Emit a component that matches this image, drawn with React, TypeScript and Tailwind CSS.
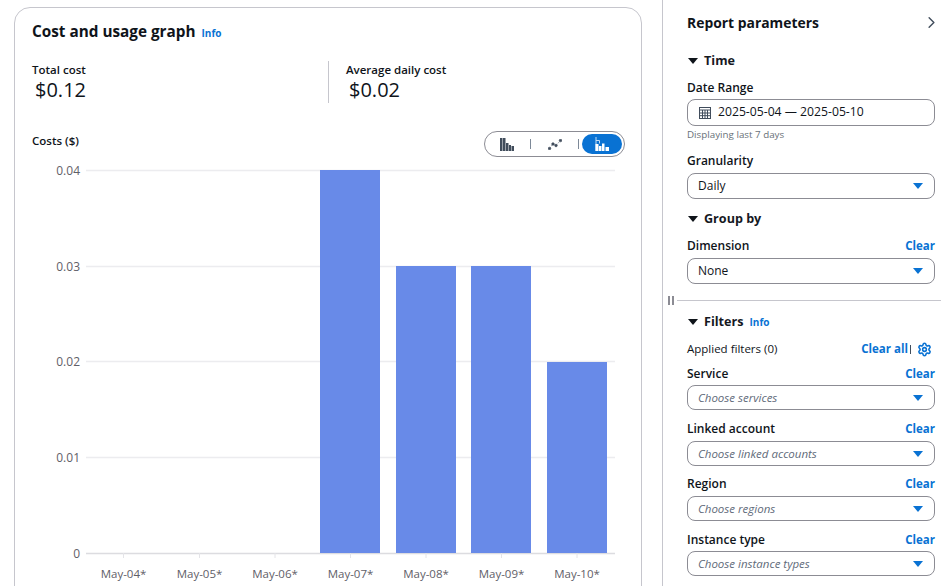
import { ChevronRight, Settings } from "lucide-react";

const gridLines = [
  { label: "0.04", y: 170 },
  { label: "0.03", y: 266 },
  { label: "0.02", y: 361 },
  { label: "0.01", y: 457 },
  { label: "0", y: 553 },
];

const bars = [
  { x: 320, y: 170 },
  { x: 396, y: 266 },
  { x: 471, y: 266 },
  { x: 547, y: 362 },
];

const days = [
  { label: "May-04*", x: 123.5 },
  { label: "May-05*", x: 199.5 },
  { label: "May-06*", x: 275 },
  { label: "May-07*", x: 350.5 },
  { label: "May-08*", x: 426 },
  { label: "May-09*", x: 501.5 },
  { label: "May-10*", x: 577 },
];

function CostChart() {
  return (
    <svg width="628" height="436" viewBox="14 150 628 436" className="block" fontFamily="'Open Sans', sans-serif">
      {gridLines.map((g) => (
        <g key={g.label}>
          <line x1="86" x2="615" y1={g.y + 0.5} y2={g.y + 0.5} stroke={g.y === 553 ? "#dcdce0" : "#ececef"} strokeWidth="1.4" />
          <text x="80" y={g.y + 5} textAnchor="end" fontSize="12" fill="#5f6068">
            {g.label}
          </text>
        </g>
      ))}
      {bars.map((b) => (
        <rect key={b.x} x={b.x} y={b.y} width="60" height={553 - b.y} fill="#688ae8" />
      ))}
      {days.map((d) => (
        <g key={d.label}>
          <line x1={d.x} x2={d.x} y1="553" y2="558" stroke="#e4e4e8" />
          <text x={d.x} y="577.5" textAnchor="middle" fontSize="11.5" fill="#5f6068">
            {d.label}
          </text>
        </g>
      ))}
    </svg>
  );
}

function ChartTypeToggle() {
  return (
    <div className="flex h-[26px] w-[141px] items-center rounded-full border border-[#8c8c94] pl-[15px] pr-[2px]">
      <svg width="14" height="13" viewBox="0 0 14 13" fill="#414d5c">
        <rect x="0" y="0" width="2.5" height="13" />
        <rect x="3" y="0" width="2.5" height="13" />
        <rect x="6" y="5" width="2.5" height="8" />
        <rect x="9" y="7" width="2" height="6" />
        <rect x="11.5" y="8" width="2.5" height="5" />
      </svg>
      <span className="ml-[16px] h-[10px] w-px bg-[#7d8998]" />
      <svg className="ml-[17px]" width="14" height="11" viewBox="0 0 14 11" fill="#414d5c" stroke="#414d5c" strokeWidth="0.6">
        <path d="M1.5 9.5 5 5 8 6.5 12.5 1.5" fill="none" strokeDasharray="1.5 1.5" />
        <circle cx="1.5" cy="9.5" r="1.3" />
        <circle cx="5" cy="5" r="1.3" />
        <circle cx="8" cy="6.5" r="1.3" />
        <circle cx="12.5" cy="1.5" r="1.3" />
      </svg>
      <span className="ml-[16px] h-[10px] w-px bg-[#7d8998]" />
      <div className="ml-[3px] flex h-[20px] w-[40px] items-center justify-center rounded-full bg-[#0972d3]">
        <svg width="14" height="14" viewBox="0 0 14 14" fill="#ffffff">
          <path d="M0.5 0h1v14h-1zM0.5 3h4v1h-3v3h-1zM4 3.5h1v3h-1z" opacity="0.75" />
          <rect x="0.5" y="7" width="3" height="7" />
          <rect x="4" y="9" width="2.5" height="5" />
          <rect x="7" y="6.5" width="2.5" height="7.5" />
          <rect x="10.5" y="10" width="3.5" height="4" />
        </svg>
      </div>
    </div>
  );
}

function SectionHeading({ title, info }: { title: string; info?: boolean }) {
  return (
    <div className="flex h-[20px] items-center">
      <span className="ml-[1px] h-0 w-0 border-x-[5px] border-t-[6px] border-x-transparent border-t-[#0f141a]" />
      <span className="ml-[6px] text-[12.6px] font-bold text-[#16191f]">{title}</span>
      {info && <span className="ml-[6px] mt-[1px] text-[10px] font-bold text-[#0972d3]">Info</span>}
    </div>
  );
}

function FieldLabel({ label, clear }: { label: string; clear?: boolean }) {
  return (
    <div className="flex h-[18px] items-center justify-between text-[12px] font-semibold text-[#0f141a]">
      <span>{label}</span>
      {clear && <span className="text-[11.5px] font-bold text-[#0972d3]">Clear</span>}
    </div>
  );
}

function SelectBox({ value, placeholder }: { value: string; placeholder?: boolean }) {
  return (
    <div
      className={
        placeholder
          ? "flex h-[25px] items-center justify-between rounded-lg border border-[#8c8c94] pl-[10px] pr-[11px]"
          : "flex h-[26px] items-center justify-between rounded-lg border border-[#8c8c94] pl-[10px] pr-[11px]"
      }
    >
      <span className={placeholder ? "text-[11.5px] italic text-[#5f6b7a]" : "text-[12px] text-[#0f141a]"}>{value}</span>
      <span className="h-0 w-0 border-x-[5px] border-t-[6px] border-x-transparent border-t-[#0972d3]" />
    </div>
  );
}

function Sash() {
  return (
    <div className="mt-[15px] flex h-[2px] items-center">
      <div className="ml-[5px] flex gap-[2px]">
        <span className="h-[9px] w-[2px] bg-[#8c8c94]" />
        <span className="h-[9px] w-[2px] bg-[#8c8c94]" />
      </div>
      <div className="ml-[3px] h-px flex-1 bg-[#c6c6cd]" />
    </div>
  );
}

export default function App() {
  return (
    <div className="flex h-[586px] w-[941px] overflow-hidden bg-white font-['Open_Sans',sans-serif] text-[#0f141a]">
      {/* left side */}
      <div className="h-full w-[663px] shrink-0 border-r border-[#c6c6cd] pl-[14px] pt-[7px]">
        <div className="h-[700px] w-[628px] rounded-t-2xl border border-[#c6c6cd]">
          <div className="flex h-[34px] items-end pl-[17px]">
            <span className="text-[15.3px] font-bold leading-[22px]">Cost and usage graph</span>
            <span className="mb-[2px] ml-[6px] text-[10px] font-bold leading-[14px] text-[#0972d3]">Info</span>
          </div>

          <div className="mt-[20px] flex pl-[17px]">
            <div className="w-[296px]">
              <div className="text-[11.5px] font-semibold leading-[16px]">Total cost</div>
              <div className="ml-[3px] text-[20px] leading-[24px]">$0.12</div>
            </div>
            <div className="-mt-[1px] h-[42px] w-px bg-[#c6c6cd]" />
            <div className="ml-[17px]">
              <div className="text-[11.5px] font-semibold leading-[16px]">Average daily cost</div>
              <div className="ml-[3px] text-[20px] leading-[24px]">$0.02</div>
            </div>
          </div>

          <div className="mt-[28px] flex items-start justify-between pl-[17px] pr-[16px]">
            <div className="mt-[2px] text-[11.5px] font-semibold leading-[16px]">Costs ($)</div>
            <ChartTypeToggle />
          </div>

          <div className="-ml-px -mt-[7px]">
            <CostChart />
          </div>
        </div>
      </div>

      {/* report parameters */}
      <div className="flex-1">
        <div className="pl-[24px] pr-[6px]">
          <div className="mt-[13px] flex h-[20px] items-center justify-between">
            <span className="text-[13.9px] font-bold">Report parameters</span>
            <ChevronRight size={19} strokeWidth={1.8} className="-mr-[6px] -mt-[2px] text-[#414d5c]" />
          </div>

          <div className="mt-[18px]">
            <SectionHeading title="Time" />
          </div>
          <div className="mt-[8px]">
            <FieldLabel label="Date Range" />
          </div>
          <div className="mt-[2px] flex h-[27px] items-center rounded-lg border border-[#8c8c94] pl-[11px]">
            <svg width="12" height="12" viewBox="0 0 12 12" fill="none" stroke="#414d5c" strokeWidth="1">
              <rect x="0.5" y="0.5" width="11" height="11" />
              <path d="M0.5 3h11M3.5 3v8.5M6 3v8.5M8.5 3v8.5M0.5 6h11M0.5 8.7h11" />
            </svg>
            <span className="ml-[7px] text-[12.2px]">2025-05-04 — 2025-05-10</span>
          </div>
          <div className="mt-[1px] h-[15px] text-[9.8px] leading-[15px] text-[#687078]">Displaying last 7 days</div>
          <div className="mt-[10px]">
            <FieldLabel label="Granularity" />
          </div>
          <div className="mt-[3px]">
            <SelectBox value="Daily" />
          </div>

          <div className="mt-[10px]">
            <SectionHeading title="Group by" />
          </div>
          <div className="mt-[8px]">
            <FieldLabel label="Dimension" clear />
          </div>
          <div className="mt-[3px]">
            <SelectBox value="None" />
          </div>
        </div>

        <Sash />

        <div className="pl-[24px] pr-[6px]">
          <div className="mt-[11px]">
            <SectionHeading title="Filters" info />
          </div>
          <div className="mt-[7px] flex h-[20px] items-center justify-between text-[11.5px]">
            <span>Applied filters (0)</span>
            <div className="flex items-center">
              <span className="font-bold text-[#0972d3]">Clear all</span>
              <span className="ml-[2px] h-[9px] w-px bg-[#414d5c]" />
              <Settings size={15} strokeWidth={2.5} className="ml-[6px] mr-[3px] text-[#0972d3]" />
            </div>
          </div>
          <div className="mt-[6px]">
            <FieldLabel label="Service" clear />
          </div>
          <div className="mt-[2px]">
            <SelectBox value="Choose services" placeholder />
          </div>
          <div className="mt-[10px]">
            <FieldLabel label="Linked account" clear />
          </div>
          <div className="mt-[3px]">
            <SelectBox value="Choose linked accounts" placeholder />
          </div>
          <div className="mt-[9px]">
            <FieldLabel label="Region" clear />
          </div>
          <div className="mt-[3px]">
            <SelectBox value="Choose regions" placeholder />
          </div>
          <div className="mt-[10px]">
            <FieldLabel label="Instance type" clear />
          </div>
          <div className="mt-[2px]">
            <SelectBox value="Choose instance types" placeholder />
          </div>
        </div>
      </div>
    </div>
  );
}
